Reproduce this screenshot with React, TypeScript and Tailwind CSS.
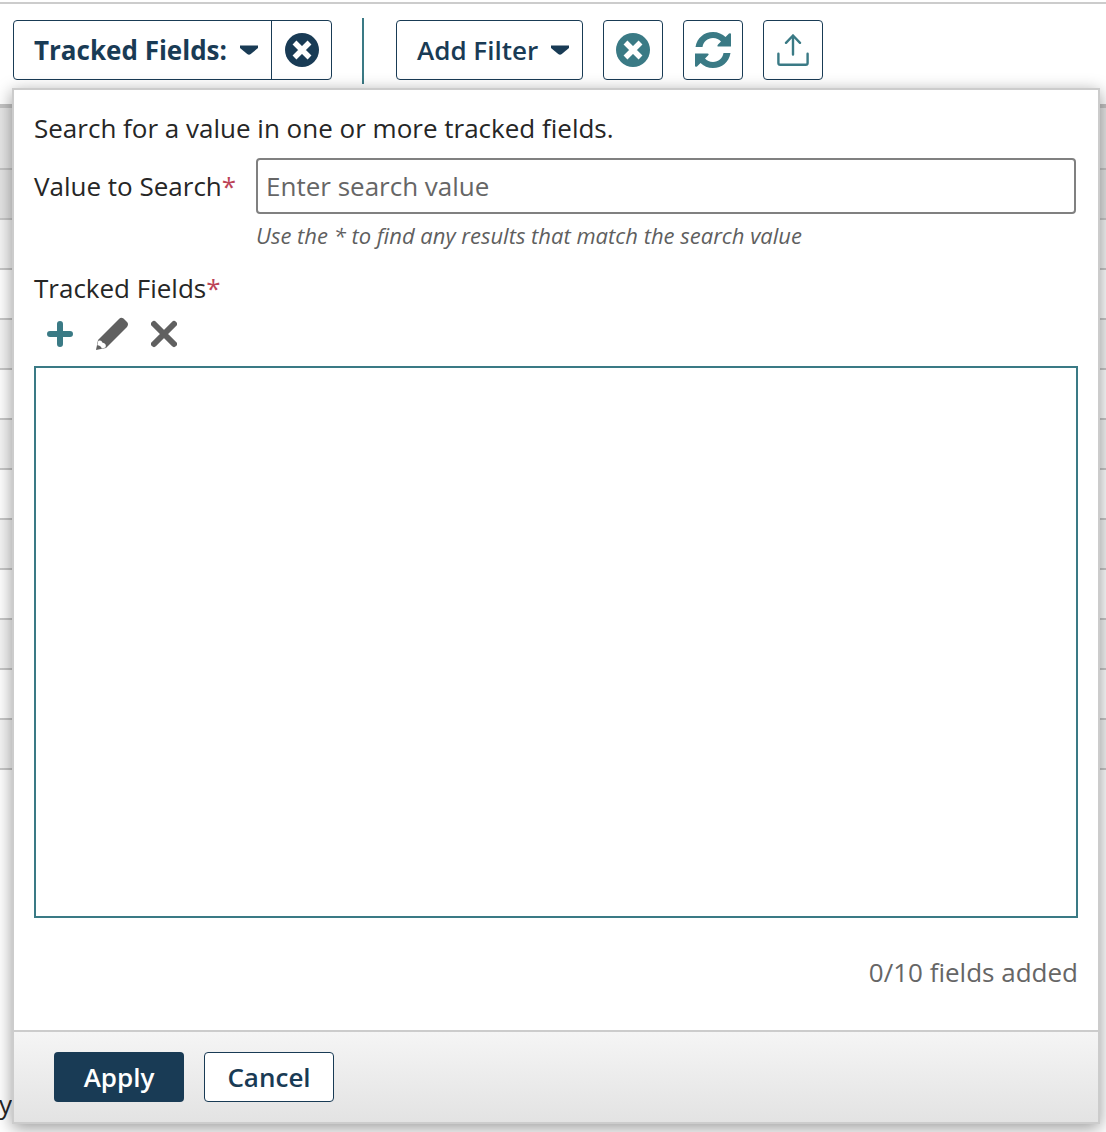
import React from "react";

const ROWS = [
  "h-[64px] bg-[#e6e6e6] border-t-4 border-[#c4c4c4]",
  "h-[50px] bg-[#e4e4e4] border-t-2 border-[#c4c4c4]",
  "h-[50px] bg-[#f5f5f5] border-t-2 border-[#c8c8c8]",
  "h-[50px] bg-white border-t-2 border-[#c8c8c8]",
  "h-[50px] bg-[#f5f5f5] border-t-2 border-[#c8c8c8]",
  "h-[50px] bg-white border-t-2 border-[#c8c8c8]",
  "h-[50px] bg-[#f5f5f5] border-t-2 border-[#c8c8c8]",
  "h-[50px] bg-white border-t-2 border-[#c8c8c8]",
  "h-[50px] bg-[#f5f5f5] border-t-2 border-[#c8c8c8]",
  "h-[50px] bg-white border-t-2 border-[#c8c8c8]",
  "h-[50px] bg-[#f5f5f5] border-t-2 border-[#c8c8c8]",
  "h-[50px] bg-white border-t-2 border-[#c8c8c8]",
  "h-[52px] bg-[#f5f5f5] border-y-2 border-[#c8c8c8]",
];

function Caret() {
  return (
    <svg className="shrink-0" width="18" height="10" viewBox="0 0 18 10" fill="#193b55">
      <path d="M0 0.500H18V3L10.800 9Q9 10.400 7.200 9L0 3Z" />
    </svg>
  );
}

function CircleX({ color }: { color: string }) {
  return (
    <svg className="shrink-0" width="34" height="34" viewBox="0 0 34 34">
      <circle cx="17" cy="17" r="17" fill={color} />
      <path d="M9.500 9.500L24.500 24.500M24.500 9.500L9.500 24.500" stroke="#fff" strokeWidth="5.500" />
    </svg>
  );
}

function Refresh() {
  return (
    <svg width="36" height="36" viewBox="0 0 36 36" fill="#3a7a85">
      <path id="arc" d="M0.500 15C2 6 9 0 18 0C23 0 27.500 2 30.500 5L34 1.500Q36 .5 36 2.500V14.500H23.500Q21.500 14.500 23 12.500L26 9.500C24 7.300 21.500 6 18 6C12.500 6 8.500 9.500 7.500 15Z" />
      <use href="#arc" transform="rotate(180 18 18)" />
    </svg>
  );
}

function Upload() {
  return (
    <svg width="32" height="32" viewBox="0 0 32 32" fill="none" stroke="#3a7a85" strokeWidth="2.400" strokeLinecap="round" strokeLinejoin="round">
      <path d="M16 20.500V1.500M9 8.800L16 1.500L23 8.800M1.400 19.800V29Q1.400 30.800 3.200 30.800H28.800Q30.600 30.800 30.600 29V19.800" />
    </svg>
  );
}

export default function App() {
  return (
    <div className="relative h-[1132px] w-[1106px] overflow-hidden bg-white pt-[2px] font-['Open_Sans',sans-serif] text-[26px] leading-[36px] text-[#262626]">
      <div className="flex h-[102px] border-t-2 border-[#ccc] pt-[14px] pl-[13px]">
        <div className="mt-[2px] flex h-[60px] w-[319px] rounded-[4px] border border-[#193b55] text-[#193b55]">
          <button className="flex w-[258px] items-center gap-[12px] border-r border-[#193b55] pl-[20px] font-bold whitespace-nowrap">
            <span className="w-[194px] text-left">Tracked Fields:</span>
            <Caret />
          </button>
          <button className="flex flex-1 items-center pl-[12.500px]"><CircleX color="#193b55" /></button>
        </div>
        <div className="ml-[30px] h-[66px] w-[2px] bg-[#3a7a85]" />
        <button className="mt-[2px] ml-[32px] flex h-[60px] w-[187px] items-center rounded-[4px] border border-[#193b55] pl-[20px] font-semibold whitespace-nowrap text-[#193b55]">
          <span className="w-[134px] text-left">Add Filter</span>
          <Caret />
        </button>
        <button className="mt-[2px] ml-[20px] flex size-[60px] items-center justify-center rounded-[4px] border border-[#193b55]"><CircleX color="#3a7a85" /></button>
        <button className="mt-[2px] ml-[20px] flex size-[60px] items-center justify-center rounded-[4px] border border-[#193b55]"><Refresh /></button>
        <button className="mt-[2px] ml-[20px] flex size-[60px] items-center justify-center rounded-[4px] border border-[#193b55]"><Upload /></button>
      </div>
      <div>
        {ROWS.map((c, i) => <div key={i} className={c} />)}
      </div>
      <div className="mt-[316px] -ml-px">y</div>

      <section className="absolute top-[88px] left-[12px] flex h-[1036px] w-[1088px] flex-col border-2 border-[#ccc] bg-white shadow-[0_4px_16px_rgba(0,0,0,0.4)]">
        <div className="flex-1 pt-[20px] pr-[20px] pl-[20px]">
          <p>Search for a value in one or more tracked fields.</p>
          <div className="mt-[12px] flex items-center">
            <label className="w-[222px] whitespace-nowrap">Value to Search<span className="text-[#bc4357]">*</span></label>
            <input placeholder="Enter search value" className="h-[56px] w-[820px] rounded-[4px] border-2 border-[#808080] px-[8px] placeholder:text-[#666]" />
          </div>
          <p className="mt-[5px] ml-[222px] text-[22px] leading-[32px] text-[#5f5f5f] italic">Use the * to find any results that match the search value</p>
          <p className="mt-[19px]">Tracked Fields<span className="text-[#bc4357]">*</span></p>
          <div className="mt-[11px] flex items-center pl-[13px]">
            <svg width="26" height="34" viewBox="0 0 26 34" stroke="#3a7a85" strokeWidth="6" strokeLinecap="round"><path d="M3 17H23M13 7V27" /></svg>
            <svg className="ml-[22px]" width="34" height="34" viewBox="0 0 34 34" fill="#606060">
              <path d="M1 33L3 23L24 2Q26 0 28.500 1.500L32 5Q34 7 32 10L11 31Z" />
              <path d="M3.300 23.800Q6.500 22.600 7.300 25.500Q12 26.500 10.500 30.500L6.800 31.600Q6 28.500 2.300 28.300Z" fill="#fff" />
            </svg>
            <svg className="ml-[22px]" width="26" height="34" viewBox="0 0 26 34" stroke="#606060" strokeWidth="6" strokeLinecap="round"><path d="M3 7L23 27M23 7L3 27" /></svg>
          </div>
          <div className="mt-[15px] h-[552px] w-[1044px] border-2 border-[#3a7a85]" />
          <p className="mt-[36px] text-right text-[#666]">0/10 fields added</p>
        </div>
        <footer className="flex h-[92px] gap-[20px] border-t-2 border-[#ccc] bg-gradient-to-b from-[#f5f5f5] to-[#e3e3e3] pt-[20px] pl-[40px] font-semibold">
          <button className="h-[50px] w-[130px] rounded-[4px] bg-[#193b55] text-white">Apply</button>
          <button className="h-[50px] w-[130px] rounded-[4px] border border-[#193b55] bg-white text-[#193b55]">Cancel</button>
        </footer>
      </section>
    </div>
  );
}
